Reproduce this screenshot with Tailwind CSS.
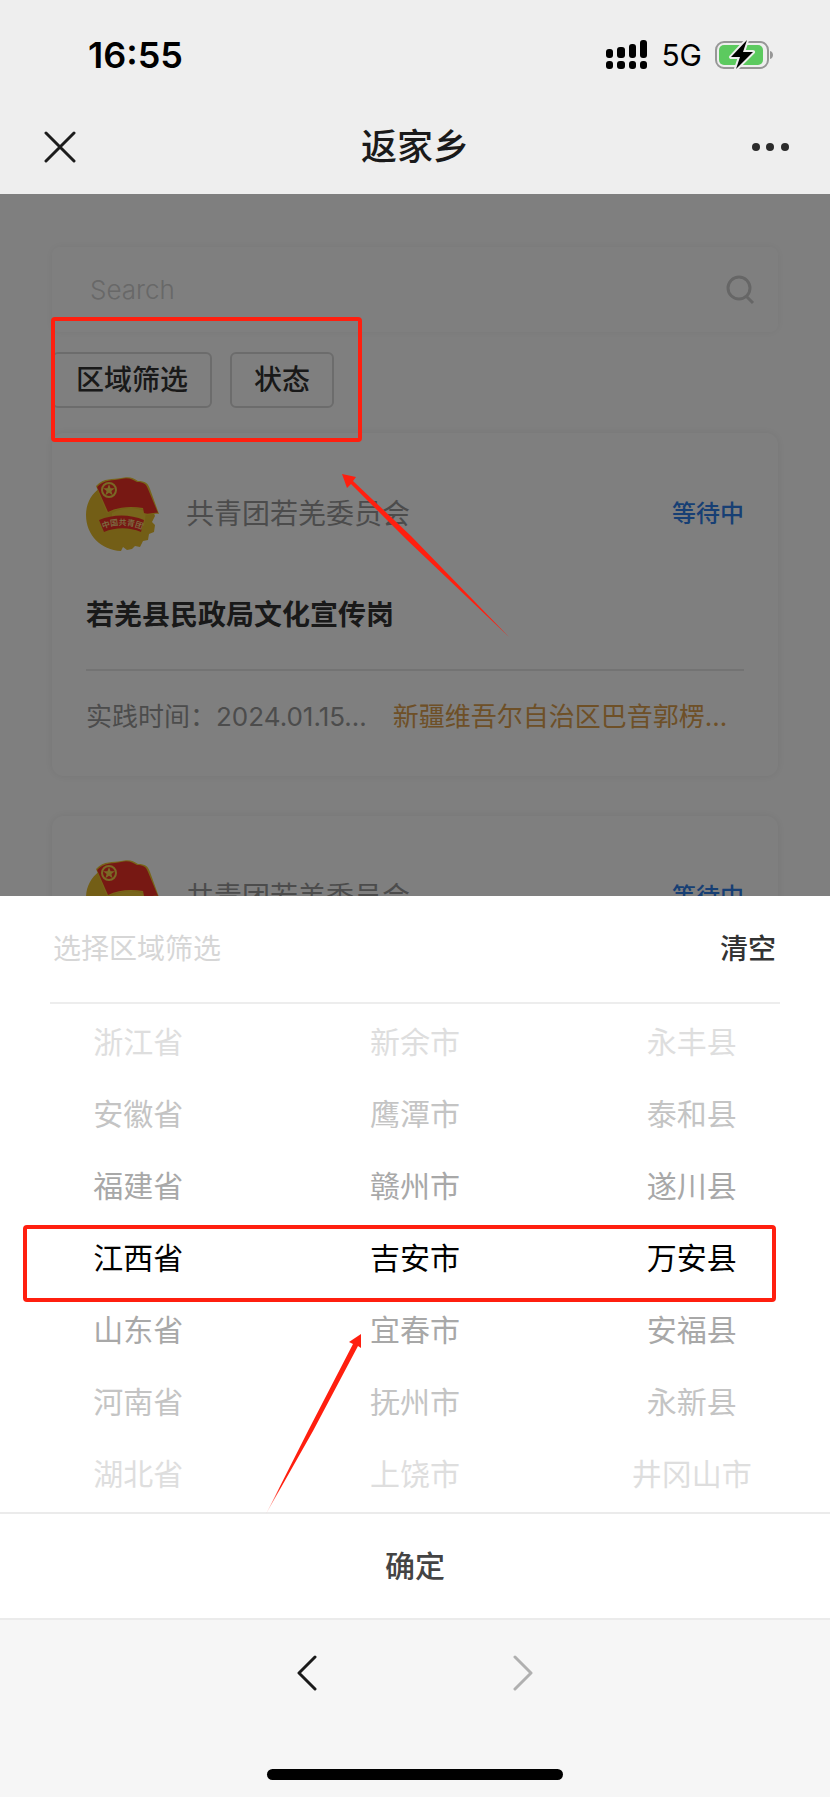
<!DOCTYPE html>
<html lang="zh-CN">
<head>
    <meta charset="UTF-8">
    <meta name="viewport" content="width=device-width, initial-scale=1.0">
    <script src="https://cdn.jsdelivr.net/npm/@tailwindcss/browser@4"></script>
    <title>返家乡</title>
</head>
<body class="flex h-screen flex-col overflow-hidden bg-white font-['Inter','Noto_Sans_CJK_SC',sans-serif] text-[28px] leading-10 text-[#333]">

    <!-- Shared drawings -->
    <svg class="hidden" aria-hidden="true">
        <symbol id="league-logo" viewBox="0 0 74 74">
            <path d="M14 11C4 18 0 28 0 38c0 20 15 35 35 36l2-4 4 3 5-1 3-3 5 1 3-6 5-1 1-6 5-2 1-7-3-3 3-6-3-8z" fill="#e6bd2c"/>
            <path d="M26 36c12-6 24-6 34-1l-2 14H26z" fill="#f0cb38"/>
            <path d="M10 9C18 0 27 3 35 1c9-2 12 0 17 3 7 0 10 2 12 8l9 25c-7-1-10 2-15 0l-1-5c-13-2-25-1-36 4z" fill="#f0c832"/>
            <path d="M11 10C18 2 27 4 35 2c8-2 12 1 16 3 7 0 9 2 11 7l10 24c-6-1-9 2-14 0l-1-5c-13-2-25-1-35 4z" fill="#ef3127"/>
            <circle cx="23" cy="13" r="7" fill="none" stroke="#f4d24a" stroke-width="2"/>
            <path d="M23 7l1.500 4.200h4.300l-3.400 2.700 1.200 4.300-3.600-2.500-3.600 2.500 1.200-4.300-3.400-2.700h4.300z" fill="#f4d24a"/>
            <path d="M13 43c14-6 31-6 45 0l-3 12c-12-5-25-5-37 0z" fill="#ef3127"/>
            <path id="ribbon" d="M17 52c12-5 25-5 38 0" fill="none"/>
            <text font-size="8" font-weight="500" fill="#f7e08a"><textPath href="#ribbon">中国共青团</textPath></text>
        </symbol>
    </svg>

    <header class="shrink-0 bg-[#eeeeee]">
        <div class="flex h-[110px] items-center justify-between pr-[56px] pl-[88px] text-black">
            <time class="text-[36px] font-semibold">16:55</time>
            <div class="flex items-center gap-[13px]">
                <svg class="h-[30px] w-[42px]" viewBox="0 0 42 30">
                    <rect x="0" y="9" width="7" height="9" rx="3"/>
                    <rect x="11" y="7" width="8" height="11" rx="3"/>
                    <rect x="23" y="4" width="7" height="14" rx="3"/>
                    <rect x="34" y="0" width="7" height="18" rx="3"/>
                    <rect x="0" y="21" width="7" height="8" rx="3"/>
                    <rect x="11" y="21" width="8" height="8" rx="3"/>
                    <rect x="23" y="21" width="7" height="8" rx="3"/>
                    <rect x="34" y="21" width="7" height="8" rx="3"/>
                </svg>
                <span class="text-[30px]">5G</span>
                <svg class="h-[30px] w-[59px]" viewBox="0 0 59 30">
                    <rect x="1" y="2" width="52" height="26" rx="8" fill="none" stroke="#979797" stroke-width="2"/>
                    <rect x="4" y="5" width="44" height="20" rx="5" fill="#5cca5f"/>
                    <path d="M55 11c4 1 4 7 0 8z" fill="#979797"/>
                    <path d="M32 0L16 17h9l-4 12 17-17h-10z" fill="#000" stroke="#eeeeee" stroke-width="4" stroke-linejoin="round" paint-order="stroke"/>
                </svg>
            </div>
        </div>
        <div class="flex h-[84px] items-center justify-between px-[40px] pb-[10px]">
            <button type="button" aria-label="关闭" class="flex w-[50px] items-center pl-1">
                <svg class="size-8" viewBox="0 0 32 32" fill="none" stroke="#1c1c1c" stroke-width="3" stroke-linecap="round"><path d="M2 2l28 28M30 2L2 30"/></svg>
            </button>
            <h1 class="text-[36px] font-medium text-[#1a1a1a]">返家乡</h1>
            <button type="button" aria-label="更多" class="flex w-[50px] items-center">
                <svg class="h-2 w-[50px]" viewBox="0 0 50 8" fill="#2b2b2b"><circle cx="16" cy="4" r="4"/><circle cx="30" cy="4" r="4"/><circle cx="45" cy="4" r="4"/></svg>
            </button>
        </div>
    </header>

    <main class="relative flex-1 overflow-hidden bg-white px-[52px] pt-[53px]">
        <label class="flex h-[85px] items-center rounded-lg pr-[22px] pl-[38px] shadow-[0_0_10px_rgba(0,0,0,0.06)]">
            <input type="search" placeholder="Search" aria-label="Search" class="min-w-0 flex-1 text-[26px] font-light outline-none placeholder:text-[#d0d0d0]">
            <svg class="size-8" viewBox="0 0 32 32" fill="none" stroke="#cccccc" stroke-width="3"><circle cx="15" cy="14" r="11"/><path d="M22 22l7 7"/></svg>
        </label>

        <div class="mt-5 flex gap-[18px]">
            <button type="button" class="h-[56px] rounded-md border-2 border-[#d8d8d8] px-[22px] font-medium">区域筛选</button>
            <button type="button" class="h-[56px] rounded-md border-2 border-[#d8d8d8] px-[22px] font-medium">状态</button>
        </div>

        <article class="mt-[25px] h-[343px] rounded-xl px-[34px] pt-[44px] shadow-[0_0_10px_rgba(0,0,0,0.08)]">
            <div class="flex items-center">
                <svg class="size-[74px]"><use href="#league-logo"/></svg>
                <span class="ml-[26px] flex-1 text-[#999]">共青团若羌委员会</span>
                <span class="text-[24px] font-medium text-[#2f7fe8]">等待中</span>
            </div>
            <h2 class="mt-[44px] font-bold">若羌县民政局文化宣传岗</h2>
            <div class="mt-[34px] flex gap-[26px] border-t-2 border-[#e6e6e6] pt-[26px] text-[26px] whitespace-nowrap">
                <span class="text-[#999]">实践时间：2024.01.15...</span>
                <span class="text-[#dca04e]">新疆维吾尔自治区巴音郭楞...</span>
            </div>
        </article>

        <article class="mt-10 h-[343px] rounded-xl px-[34px] pt-[44px] shadow-[0_0_10px_rgba(0,0,0,0.08)]">
            <div class="flex items-center">
                <svg class="size-[74px]"><use href="#league-logo"/></svg>
                <span class="ml-[26px] flex-1 text-[#999]">共青团若羌委员会</span>
                <span class="text-[24px] font-medium text-[#2f7fe8]">等待中</span>
            </div>
        </article>

        <!-- Mask behind the sheet -->
        <div class="absolute inset-0 bg-black/50"></div>

        <!-- Guide marks -->
        <div class="absolute top-[123px] left-[51px] h-[125px] w-[311px] rounded-sm border-4 border-[#ff1f0f]"></div>
        <svg class="absolute top-[280px] left-[341px] h-[164px] w-[170px]" viewBox="0 0 170 164" fill="#ff1f0f">
            <path d="M1 0l14 3-3 4 58 55 98 101L66 66 10 10l-4 4z"/>
        </svg>
    </main>

    <section class="relative shrink-0 bg-white" aria-label="选择区域筛选">
        <div class="mx-[50px] flex h-[108px] items-center justify-between border-b-2 border-[#ededed] pr-1 pl-[3px]">
            <span class="text-[#d6d6d6]">选择区域筛选</span>
            <button type="button" class="font-medium">清空</button>
        </div>
        <div class="grid grid-cols-3 py-0.5 text-center text-[30px] leading-[72px]">
            <ul role="listbox" aria-label="省">
                <li role="option" class="text-[#dedede]">浙江省</li>
                <li role="option" class="text-[#c4c4c4]">安徽省</li>
                <li role="option" class="text-[#a8a8a8]">福建省</li>
                <li role="option" aria-selected="true" class="text-black">江西省</li>
                <li role="option" class="text-[#a8a8a8]">山东省</li>
                <li role="option" class="text-[#c4c4c4]">河南省</li>
                <li role="option" class="text-[#dedede]">湖北省</li>
            </ul>
            <ul role="listbox" aria-label="市">
                <li role="option" class="text-[#dedede]">新余市</li>
                <li role="option" class="text-[#c4c4c4]">鹰潭市</li>
                <li role="option" class="text-[#a8a8a8]">赣州市</li>
                <li role="option" aria-selected="true" class="text-black">吉安市</li>
                <li role="option" class="text-[#a8a8a8]">宜春市</li>
                <li role="option" class="text-[#c4c4c4]">抚州市</li>
                <li role="option" class="text-[#dedede]">上饶市</li>
            </ul>
            <ul role="listbox" aria-label="县">
                <li role="option" class="text-[#dedede]">永丰县</li>
                <li role="option" class="text-[#c4c4c4]">泰和县</li>
                <li role="option" class="text-[#a8a8a8]">遂川县</li>
                <li role="option" aria-selected="true" class="text-black">万安县</li>
                <li role="option" class="text-[#a8a8a8]">安福县</li>
                <li role="option" class="text-[#c4c4c4]">永新县</li>
                <li role="option" class="text-[#dedede]">井冈山市</li>
            </ul>
        </div>
        <button type="button" class="block h-[108px] w-full border-y-2 border-[#ebebeb] text-[30px] font-medium text-[#444]">确定</button>

        <div class="absolute top-[329px] left-[23px] h-[77px] w-[753px] rounded-sm border-4 border-[#ff1f0f]"></div>
        <svg class="absolute top-[438px] left-[265px] h-[182px] w-[98px]" viewBox="0 0 98 182">
            <defs>
                <linearGradient id="tail" x1="0" y1="1" x2="0" y2="0">
                    <stop offset="0" stop-color="#ff1f0f" stop-opacity="0.2"/>
                    <stop offset="0.15" stop-color="#ff1f0f"/>
                </linearGradient>
            </defs>
            <path d="M96 0v14l-3-2-45 85L1 180 44 95l44-85-4-2z" fill="url(#tail)"/>
        </svg>
    </section>

    <nav class="flex h-[177px] shrink-0 flex-col items-center justify-between bg-[#f6f6f6] pt-[35px] pb-[17px]">
        <div class="flex gap-[194px]">
            <button type="button" aria-label="后退">
                <svg class="h-9 w-[22px]" viewBox="0 0 22 36" fill="none" stroke="#1a1a1a" stroke-width="3" stroke-linecap="round" stroke-linejoin="round"><path d="M19 2L3 18l16 16"/></svg>
            </button>
            <button type="button" aria-label="前进" disabled>
                <svg class="h-9 w-[22px]" viewBox="0 0 22 36" fill="none" stroke="#b0b0b0" stroke-width="3" stroke-linecap="round" stroke-linejoin="round"><path d="M3 2l16 16L3 34"/></svg>
            </button>
        </div>
        <div class="h-[11px] w-[296px] rounded-full bg-black"></div>
    </nav>
</body>
</html>
